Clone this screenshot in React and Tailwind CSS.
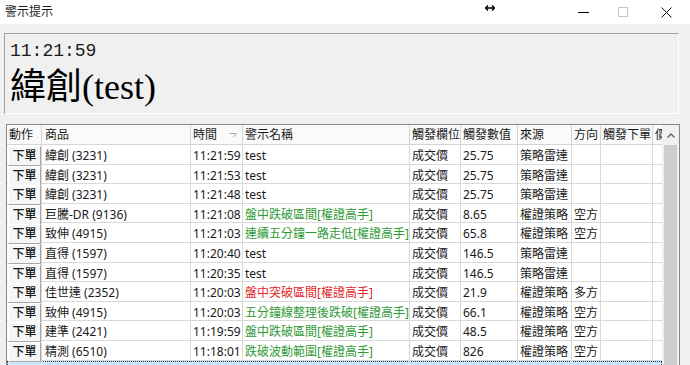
import React from "react";

const cols = "grid grid-cols-[35px_149px_52px_167px_51px_57px_54px_29px_52px_1fr]";

const rows = [
    ["緯創 (3231)", "11:21:59", "test", "", "成交價", "25.75", "策略雷達", ""],
    ["緯創 (3231)", "11:21:53", "test", "", "成交價", "25.75", "策略雷達", ""],
    ["緯創 (3231)", "11:21:48", "test", "", "成交價", "25.75", "策略雷達", ""],
    ["巨騰-DR (9136)", "11:21:08", "盤中跌破區間[權證高手]", "g", "成交價", "8.65", "權證策略", "空方"],
    ["致伸 (4915)", "11:21:03", "連續五分鐘一路走低[權證高手]", "g", "成交價", "65.8", "權證策略", "空方"],
    ["直得 (1597)", "11:20:40", "test", "", "成交價", "146.5", "策略雷達", ""],
    ["直得 (1597)", "11:20:35", "test", "", "成交價", "146.5", "策略雷達", ""],
    ["佳世達 (2352)", "11:20:03", "盤中突破區間[權證高手]", "r", "成交價", "21.9", "權證策略", "多方"],
    ["致伸 (4915)", "11:20:03", "五分鐘線整理後跌破[權證高手]", "g", "成交價", "66.1", "權證策略", "空方"],
    ["建準 (2421)", "11:19:59", "盤中跌破區間[權證高手]", "g", "成交價", "48.5", "權證策略", "空方"],
    ["精測 (6510)", "11:18:01", "跌破波動範圍[權證高手]", "g", "成交價", "826", "權證策略", "空方"],
];

const headers = ["動作", "商品", "時間", "警示名稱", "觸發欄位", "觸發數值", "來源", "方向", "觸發下單", "價"];

const cell = "flex items-center border-r border-[#d9d9d9] pl-[2px] whitespace-nowrap overflow-hidden";

const Row = ({ r }) => {
    const color = r[3] === "g" ? "text-[#2f9a35]" : r[3] === "r" ? "text-[#e3262b]" : "";
    return (
        <div className={`${cols} h-[19.6px] border-b border-[#d9d9d9] bg-white`}>
            <div className="flex border-r border-[#d9d9d9] pl-[1px] py-[1px]">
                <div className="flex-1 flex items-center justify-center bg-[#f6f6f6] border border-t-white border-l-white border-r-[#a6a6a6] border-b-[#a6a6a6] font-medium">
                    下單
                </div>
            </div>
            <div className={`${cell} pl-[3px]`}>{r[0]}</div>
            <div className={cell}>{r[1]}</div>
            <div className={`${cell} ${color}`}>{r[2]}</div>
            <div className={cell}>{r[4]}</div>
            <div className={cell}>{r[5]}</div>
            <div className={cell}>{r[6]}</div>
            <div className={cell}>{r[7]}</div>
            <div className={cell}></div>
            <div className="overflow-hidden"></div>
        </div>
    );
};

const App = () => {
    return (
        <div
            className="w-[690px] h-[365px] overflow-hidden bg-[#f0f0f0] text-[#1a1a1a] text-[12px]"
            style={{ fontFamily: '"Noto Sans", "Noto Sans CJK TC", sans-serif' }}
        >
            {/* title bar */}
            <div className="h-[24px] bg-white flex items-center">
                <div className="flex-1 pl-[5px] text-[12px]">警示提示</div>
                <div className="w-[20px] flex justify-center pb-[8px]">
                    <svg width="10" height="6" viewBox="0 0 10 6">
                        <path d="M0.5 3 L9.5 3 M3 0.5 L0.5 3 L3 5.5 M7 0.5 L9.5 3 L7 5.5" stroke="#000" strokeWidth="1.4" fill="none" />
                    </svg>
                </div>
                <div className="w-[63px]" />
                <div className="w-[40px] flex justify-center">
                    <div className="w-[11px] h-px bg-black" />
                </div>
                <div className="w-[40px] flex justify-center">
                    <div className="w-[10px] h-[10px] border border-[#c4c4c4]" />
                </div>
                <div className="w-[47px] flex justify-center">
                    <svg width="11" height="11" viewBox="0 0 11 11">
                        <path d="M0.5 0.5 L10.5 10.5 M10.5 0.5 L0.5 10.5" stroke="#111" strokeWidth="1" fill="none" />
                    </svg>
                </div>
            </div>

            {/* top panel */}
            <div className="ml-[4px] mt-[9px] w-[675px] h-[81px] border-t border-l border-[#a0a0a0] border-r border-r-white border-b border-b-white pl-[5px] pt-[6px]">
                <div className="text-[18px] leading-[22px]" style={{ fontFamily: '"Liberation Mono", monospace' }}>
                    11:21:59
                </div>
                <div
                    className="text-[36px] leading-[40px] mt-[5px] text-black"
                    style={{ fontFamily: '"Liberation Serif", "Noto Sans CJK TC", serif' }}
                >
                    緯創(test)
                </div>
            </div>

            {/* list */}
            <div className="ml-[6px] mt-[10px] w-[674px] h-[260px] border border-[#828790] bg-white flex">
                <div className="flex-1 overflow-hidden">
                    <div className={`${cols} h-[20px] border-b border-[#d5d5d5] bg-[#fafafa]`}>
                        {headers.map((h, i) => (
                            <div
                                key={h}
                                className={`flex items-center whitespace-nowrap overflow-hidden border-r border-[#d5d5d5] ${i === 1 ? "pl-[3px]" : "pl-[2px]"} ${i === 9 ? "border-r-0" : ""}`}
                            >
                                {h}
                                {i === 2 && (
                                    <svg className="ml-[12px] mt-[2px]" width="8" height="5" viewBox="0 0 8 5">
                                        <path d="M0.5 0.5 L7.5 0.5 L4 4.5" stroke="#a8a8a8" strokeWidth="1" fill="none" />
                                    </svg>
                                )}
                            </div>
                        ))}
                    </div>
                    {rows.map((r, i) => (
                        <Row key={i} r={r} />
                    ))}
                    <div className="h-[20px] bg-[#cce8ff] border border-dotted border-[#333]" />
                </div>
                <div className="w-[17px] bg-[#f0f0f0] flex flex-col">
                    <div className="h-[20px] flex items-center justify-center">
                        <svg width="8" height="5" viewBox="0 0 8 5">
                            <path d="M0.5 4.5 L4 1 L7.5 4.5" stroke="#606060" strokeWidth="1.3" fill="none" />
                        </svg>
                    </div>
                    <div className="flex-1 mx-[2px] bg-[#cdcdcd]" />
                </div>
            </div>
        </div>
    );
};

export default App;
